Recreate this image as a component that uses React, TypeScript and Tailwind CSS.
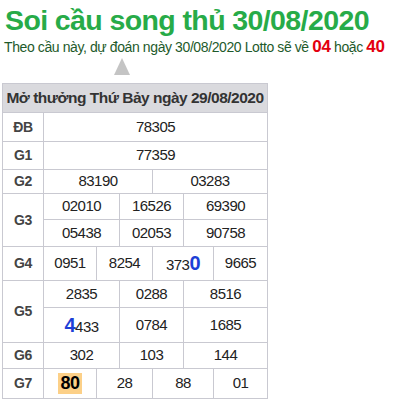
const font = "font-['Liberation_Sans',Arial,sans-serif]";

const Label = ({ text, rows = "" }: { text: string; rows?: string }) => (
  <div
    className={`flex items-center justify-center border-r border-b border-[#c9c9d1] text-[14px] tracking-[-0.4px] font-bold text-[#444] ${rows}`}
  >
    {text}
  </div>
);

const Cell = ({ children, span }: { children: React.ReactNode; span: string }) => (
  <div
    className={`flex items-center justify-center border-r border-b border-[#c9c9d1] text-[15px] tracking-[-0.5px] text-[#222] ${span}`}
  >
    {children}
  </div>
);

const Big = ({ children }: { children: React.ReactNode }) => (
  <span className="text-[20px] leading-none font-bold text-[#1d3fd6]">{children}</span>
);

export default function App() {
  return (
    <div className={`w-[395px] h-[403px] bg-white overflow-hidden ${font}`}>
      <h1 className="pl-[5px] pt-[5px] text-[28.5px] tracking-[-0.6px] leading-[30px] font-bold text-[#27ab48]">
        Soi cầu song thủ 30/08/2020
      </h1>
      <p className="mt-[2px] h-[20px] pl-[4px] text-[14px] tracking-[-0.4px] leading-[20px] text-[#1e5a2b] whitespace-nowrap">
        Theo cầu này, dự đoán ngày 30/08/2020 Lotto sẽ về{" "}
        <span className="text-[17px] tracking-[-0.3px] leading-none font-bold text-[#e3000f]">04</span> hoặc{" "}
        <span className="text-[17px] tracking-[-0.3px] leading-none font-bold text-[#e3000f]">40</span>
      </p>
      <div className="mt-[1px] ml-[114px] h-0 w-0 border-l-[8px] border-r-[8px] border-b-[17px] border-l-transparent border-r-transparent border-b-[#c4c4c4]" />

      <div className="mt-[8px] ml-[2px] grid w-[266px] grid-cols-[41px_53px_23px_33px_31px_30px_54px] grid-rows-[29px_29px_28px_24px_26px_27px_34px_27px_35px_26px_30px] border-l border-t border-[#c9c9d1]">
        <div className="col-span-7 flex items-center justify-center border-r border-b border-[#c9c9d1] bg-[#dadade] text-[15.5px] tracking-[-0.5px] font-bold text-[#333]">
          Mở thưởng Thứ Bảy ngày 29/08/2020
        </div>

        <Label text="ĐB" />
        <Cell span="col-span-6">78305</Cell>

        <Label text="G1" />
        <Cell span="col-span-6">77359</Cell>

        <Label text="G2" />
        <Cell span="col-span-3">83190</Cell>
        <Cell span="col-span-3">03283</Cell>

        <Label text="G3" rows="row-span-2" />
        <Cell span="col-span-2">02010</Cell>
        <Cell span="col-span-2">16526</Cell>
        <Cell span="col-span-2">69390</Cell>
        <Cell span="col-span-2">05438</Cell>
        <Cell span="col-span-2">02053</Cell>
        <Cell span="col-span-2">90758</Cell>

        <Label text="G4" />
        <Cell span="col-span-1">0951</Cell>
        <Cell span="col-span-2">8254</Cell>
        <Cell span="col-span-2">
          <span className="pt-[3px]">
            373<Big>0</Big>
          </span>
        </Cell>
        <Cell span="col-span-1">9665</Cell>

        <Label text="G5" rows="row-span-2" />
        <Cell span="col-span-2">2835</Cell>
        <Cell span="col-span-2">0288</Cell>
        <Cell span="col-span-2">8516</Cell>
        <Cell span="col-span-2">
          <span className="pt-[3px]">
            <Big>4</Big>433
          </span>
        </Cell>
        <Cell span="col-span-2">0784</Cell>
        <Cell span="col-span-2">1685</Cell>

        <Label text="G6" />
        <Cell span="col-span-2">302</Cell>
        <Cell span="col-span-2">103</Cell>
        <Cell span="col-span-2">144</Cell>

        <Label text="G7" />
        <Cell span="col-span-1">
          <span className="bg-[#fcd088] px-[2px] text-[18px] leading-[21px] font-bold text-black">80</span>
        </Cell>
        <Cell span="col-span-2">28</Cell>
        <Cell span="col-span-2">88</Cell>
        <Cell span="col-span-1">01</Cell>
      </div>
    </div>
  );
}
